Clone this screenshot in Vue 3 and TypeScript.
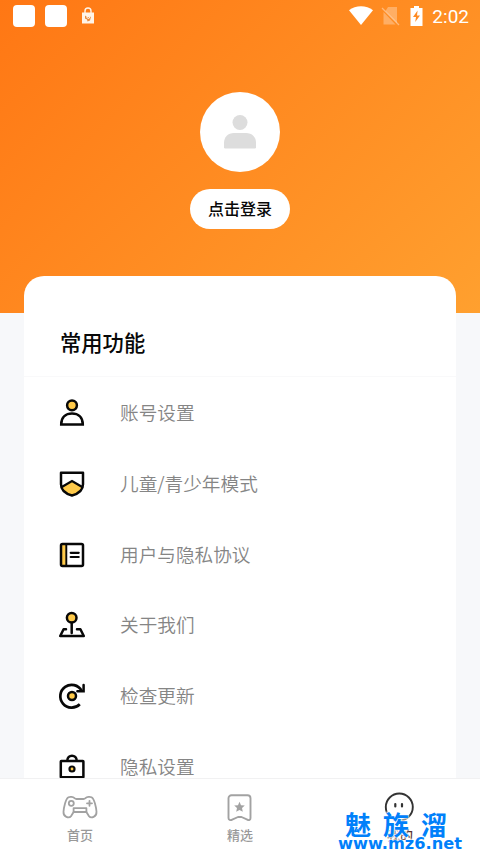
<script setup lang="ts">
interface MenuItem {
  icon: string
  label: string
}

const items: MenuItem[] = [
  { icon: 'user', label: '账号设置' },
  { icon: 'shield', label: '儿童/青少年模式' },
  { icon: 'book', label: '用户与隐私协议' },
  { icon: 'joystick', label: '关于我们' },
  { icon: 'refresh', label: '检查更新' },
  { icon: 'bag', label: '隐私设置' },
]
</script>

<template>
  <div class="screen">
    <header class="status">
      <i class="square"></i>
      <i class="square"></i>
      <svg class="lock" width="14" height="18" viewBox="0 0 14 18">
        <path d="M4 6V4a3 3 0 0 1 6 0v2" fill="none" stroke="#fff4e8" stroke-width="1.4" />
        <path d="M1 5.500h12v11H1z" fill="#fff4e8" />
        <path d="M4 8.500l2.500 2 3.500-1-1 4-2.500 1-.5-2-2-1z" fill="#e98a3d" />
        <path d="M5.500 10l2 2 1.800-2.800" fill="none" stroke="#fff4e8" stroke-width="1" />
      </svg>
      <span class="grow"></span>
      <svg class="wifi" width="24" height="20" viewBox="0 0 24 20">
        <path d="M0 4.200C6.500-1 17.500-1 24 4.200L12 19z" fill="#fff" />
      </svg>
      <svg class="nosim" width="19" height="20" viewBox="0 0 19 20">
        <path d="M7 1h9v16L4.500 5zM2.500 6v12.500h12z" fill="#fff" opacity=".3" />
        <path d="M1 2l17 17" stroke="#fff" stroke-width="1.3" opacity=".4" />
      </svg>
      <svg class="battery" width="13" height="20" viewBox="0 0 13 20">
        <path d="M4 0h5v2h3.500v18H.5V2H4z" fill="#fff" />
        <path d="M7.600 4.500L3 11h3l-.8 5L10 9.500H7z" fill="#ff8b22" />
      </svg>
      <span class="clock">2:02</span>
    </header>

    <section class="hero">
      <div class="avatar">
        <svg width="32" height="34" viewBox="0 0 32 34">
          <circle cx="16" cy="7.500" r="7.500" fill="#ddd" />
          <path d="M0 32.200V28c0-6 4-10 10-10h12c6 0 10 4 10 10v4.200q0 1.300-1.300 1.300H1.300Q0 33.500 0 32.200z" fill="#ddd" />
        </svg>
      </div>
      <button class="login">点击登录</button>
    </section>

    <main class="card">
      <h2 class="title">常用功能</h2>
      <ul class="menu">
        <li v-for="item in items" :key="item.icon" class="row">
          <svg class="icon" width="28" height="28" viewBox="0 0 28 28" fill="none" stroke="#080808" stroke-width="2.500" stroke-linejoin="round" stroke-linecap="round">
            <template v-if="item.icon === 'user'">
              <circle cx="14" cy="6.300" r="4.900" fill="#ffca4a" />
              <path d="M3.200 25.500C3.200 18 8 14.500 14 14.500S24.800 18 24.800 25.500z" stroke-linejoin="miter" />
            </template>
            <template v-else-if="item.icon === 'shield'">
              <path d="M3.500 17L14 11l10.500 6C24 21 18 24.500 14 25.500 10 24.500 4 21 3.500 17z" fill="#ffca4a" stroke="none" />
              <path d="M3 2.700h22v11.600c0 6.700-6.500 10-11 11.200C9.500 24.300 3 21 3 14.300z" />
              <path d="M3.800 17L14 11l10.200 6" stroke-width="2.200" stroke-linejoin="miter" />
            </template>
            <template v-else-if="item.icon === 'book'">
              <path d="M4 4h4v20H4z" fill="#ffca4a" stroke="none" />
              <rect x="3" y="3" width="22" height="22" rx="1.500" />
              <path d="M8.300 3.500v21" stroke-width="1.900" />
              <path d="M12.700 11.800h8M12.700 16h8" stroke-width="2.200" />
            </template>
            <template v-else-if="item.icon === 'joystick'">
              <circle cx="13.700" cy="6.700" r="4.800" fill="#ffca4a" />
              <path d="M13.700 12v10M8 18.300H5.600L2.200 25h23.600l-3.400-6.700H19" />
            </template>
            <template v-else-if="item.icon === 'refresh'">
              <path d="M23.600 8.600A11.400 11.400 0 1 0 21.800 22.300" stroke-linecap="butt" stroke-width="2.700" />
              <path d="M25.600 3v6.300h-6.200" stroke-linejoin="miter" />
              <circle cx="14" cy="14" r="4" fill="#ffca4a" />
            </template>
            <template v-else>
              <path d="M9.300 7.800C9.300 1 18.700 1 18.700 7.800" />
              <rect x="2.800" y="8" width="22.600" height="16.300" rx=".5" />
              <circle cx="14" cy="16" r="2.500" fill="#ffca4a" stroke-width="2.200" />
            </template>
          </svg>
          <span class="label">{{ item.label }}</span>
        </li>
      </ul>
    </main>

    <nav class="tabs">
      <a class="tab">
        <svg width="36" height="28" viewBox="0 0 36 28" fill="none" stroke="#a2a2a2" stroke-width="1.800" stroke-linejoin="round" stroke-linecap="round">
          <path d="M6.500 3.300C8 2.500 11 2.700 12.500 4.200c.7.700 1.200.8 2 .8h7c.8 0 1.300-.1 2-.8 1.500-1.500 4.500-1.700 6-.9 2.900 1.500 4.700 10.200 5 14.500.3 5.300-5.300 7-7.800 4l-2.300-3.800H11.600l-2.300 3.800c-2.500 3-8.100 1.300-7.800-4 .3-4.300 2.100-13 5-14.500z" />
          <path d="M11.600 14.200h12.800v3.500M11.600 14.200v3.500" />
          <circle cx="9.300" cy="9.300" r="2.500" />
          <path d="M27.500 6.800v5M25 9.300h5" />
        </svg>
        <span>首页</span>
      </a>
      <a class="tab">
        <svg width="28" height="28" viewBox="0 0 28 28" fill="none" stroke="#a2a2a2" stroke-width="1.900" stroke-linejoin="round">
          <path d="M5.500 1.200h16a3 3 0 0 1 3 3v19.700c0 2-1.500 2.700-3.200 1.800L15.500 23h-3.500l-5.800 2.700C4.500 26.600 2.500 25.900 2.500 23.900V4.200a3 3 0 0 1 3-3z" />
          <path d="M13.500 7.700l1.500 3.500 3.800.4-2.800 2.500.8 3.700-3.300-1.900-3.300 1.900.8-3.700-2.800-2.500 3.800-.4z" fill="#a2a2a2" stroke="none" />
        </svg>
        <span>精选</span>
      </a>
      <a class="tab active">
        <svg width="32" height="30" viewBox="0 0 32 30" fill="none" stroke="#333" stroke-width="1.900" stroke-linecap="round">
          <circle cx="15.300" cy="15" r="13.500" />
          <path d="M11.300 12v2.400M18 12v2.400" stroke-width="2.200" />
        </svg>
        <span>我的</span>
      </a>
    </nav>

    <div class="mark">
      <div class="mark-name"><span>魅</span><span>族</span><span>溜</span></div>
      <div class="mark-url">www.mz6.net</div>
    </div>
  </div>
</template>

<style>
body {
  margin: 0;
  overflow: hidden;
}
</style>

<style scoped>
.screen {
  position: relative;
  display: flex;
  flex-direction: column;
  width: 480px;
  height: 853px;
  overflow: hidden;
  background: #f7f8fa;
  font-family: Roboto, "Noto Sans CJK SC", sans-serif;
}
.status {
  position: absolute;
  inset: 0 0 auto;
  box-sizing: border-box;
  height: 32px;
  padding: 0 11px 0 13px;
  display: flex;
  align-items: center;
}
.square {
  width: 22px;
  height: 22px;
  margin-right: 10px;
  border-radius: 4px;
  background: #fff;
}
.lock { margin-left: 4px; }
.grow { flex: 1; }
.nosim { margin-left: 8px; }
.battery { margin-left: 10px; }
.clock {
  margin-left: 9px;
  color: #fff;
  font-size: 19px;
  line-height: 32px;
  padding-top: 1px;
}
.hero {
  flex: none;
  box-sizing: border-box;
  height: 313px;
  padding-top: 92px;
  display: flex;
  flex-direction: column;
  align-items: center;
  background: linear-gradient(135deg, #ff7714, #ffa02f);
}
.avatar {
  display: flex;
  align-items: center;
  justify-content: center;
  width: 80px;
  height: 80px;
  border-radius: 50%;
  background: #fff;
}
.login {
  width: 100px;
  height: 40px;
  margin-top: 17px;
  padding: 0 0 2px;
  border: 0;
  border-radius: 20px;
  background: #fff;
  color: #080808;
  font: 500 16px/38px "Noto Sans CJK SC", sans-serif;
}
.card {
  flex: 1;
  min-height: 0;
  overflow: hidden;
  margin: -37px 24px 0;
  border-radius: 20px 20px 0 0;
  background: #fff;
}
.title {
  box-sizing: border-box;
  height: 101px;
  margin: 0;
  padding: 48px 0 0 36px;
  border-bottom: 1px solid #f9f9fa;
  color: #080808;
  font: 500 21.300px/36px "Noto Sans CJK SC", sans-serif;
}
.menu {
  margin: 0;
  padding: 1px 0 0;
  list-style: none;
}
.row {
  display: flex;
  align-items: center;
  height: 70.700px;
  padding-left: 34px;
}
.label {
  margin-left: 34px;
  padding-bottom: 2px;
  color: #858585;
  font: 350 18.650px/28px "Noto Sans CJK SC", sans-serif;
}
.tabs {
  flex: none;
  box-sizing: border-box;
  height: 75px;
  border-top: 1px solid #f1f1f2;
  display: grid;
  grid-template-columns: repeat(3, 1fr);
  background: #fff;
}
.tab {
  display: flex;
  flex-direction: column;
  align-items: center;
  padding-top: 15px;
  color: #999;
  font: 500 13px/20px "Noto Sans CJK SC", sans-serif;
}
.tab span { margin-top: 3px; }
.tab.active { color: #5a3227; }
.tab.active svg { margin-top: -2px; }
.mark {
  position: absolute;
  left: 338px;
  top: 809px;
  width: 124px;
  color: #0080fa;
  text-shadow: 0 0 2px #fff, 0 0 2px #fff, 0 0 2px #fff, 0 0 3px #fff;
}
.mark-name {
  display: flex;
  justify-content: space-between;
  padding: 0 15px 0 7px;
  font: 700 26px/30px "Noto Sans CJK SC", sans-serif;
}
.mark-url {
  margin-top: -6px;
  font: bold 16.200px/22px "DejaVu Sans", sans-serif;
  white-space: nowrap;
}
</style>
